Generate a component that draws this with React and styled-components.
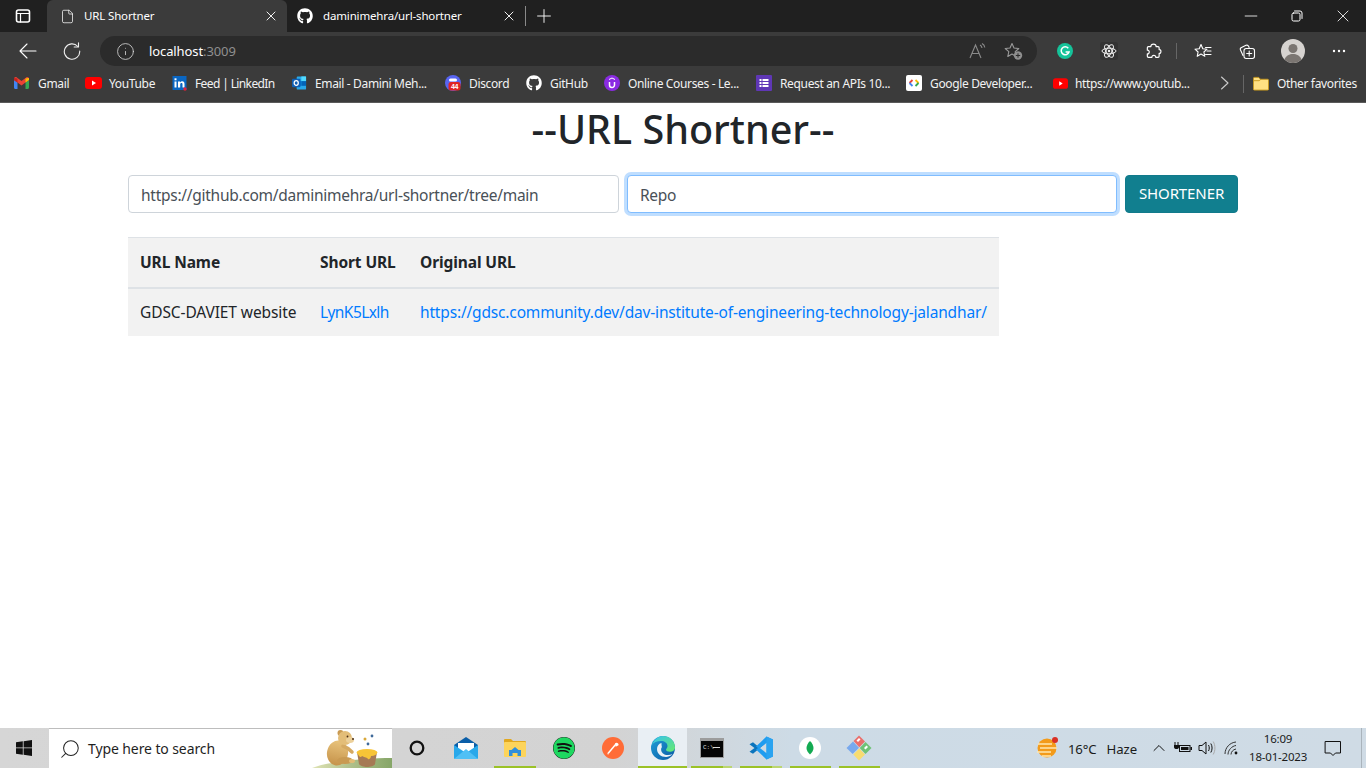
import React from "react";
import styled, { createGlobalStyle } from "styled-components";
import { Info, X, Plus, Minus, ChevronUp, Search, File } from "lucide-react";
import { FaGithub, FaSpotify } from "react-icons/fa";

const Global = createGlobalStyle`
  html, body { margin: 0; padding: 0; background: #fff; }
  body { font-family: "Noto Sans", "Open Sans", sans-serif; overflow: hidden; }
  * { box-sizing: border-box; }
`;
const Screen = styled.div`
  width: 1366px; height: 768px; display: flex; flex-direction: column; overflow: hidden;
`;
const TabStrip = styled.div`
  height: 32px; background: #202020; display: flex; align-items: stretch; color: #fff; font-size: 11.5px; letter-spacing: -0.15px;
`;
const SideButton = styled.div`
  width: 47px; display: flex; align-items: center; justify-content: center; padding-right: 1px;
`;
const Tab = styled.div`
  width: ${p => p.$w}px; height: 32px; display: flex; align-items: center; padding-left: ${p => p.$pad}px;
  background: ${p => p.$active ? "#3b3b3b" : "transparent"}; border-radius: 6px 6px 0 0; position: relative;
`;
const TabTitle = styled.span`
  flex: 1; margin-left: ${p => p.$gap}px; white-space: nowrap; padding-bottom: 1px;
`;
const TabClose = styled.span`
  width: 32px; display: flex; justify-content: center; margin-left: auto;
`;
const TabSep = styled.div`
  width: 1px; height: 20px; background: #8a8a8a; align-self: center;
`;
const NewTab = styled.div`
  width: 36px; display: flex; align-items: center; justify-content: center;
`;
const WindowControls = styled.div`
  margin-left: auto; display: flex; align-items: center;
`;
const WinBtn = styled.div`
  width: 46px; height: 32px; display: flex; align-items: center; justify-content: center;
`;
const Toolbar = styled.div`
  height: 34px; background: #3b3b3b; display: flex; align-items: flex-end; color: #fff;
`;
const NavBtn = styled.div`
  width: 44px; height: 30px; display: flex; align-items: center; justify-content: center;
  margin-left: ${p => p.$ml || 0}px;
`;
const AddressBar = styled.div`
  width: 937px; height: 30px; margin-left: 6px; background: #2b2b2b; border-radius: 15px; display: flex; align-items: center;
  font-size: 13px; padding-left: 16px; letter-spacing: -0.1px;
`;
const Host = styled.span`
  color: #fff; margin-left: 14px;
`;
const Port = styled.span`
  color: #8f8f8f;
`;
const AddrIcons = styled.div`
  margin-left: auto; display: flex; align-items: center; gap: 14px; padding-right: 12px;
`;
const AddrIcon = styled.div`
  width: 22px; height: 22px; display: flex; align-items: center; justify-content: center;
`;
const ToolIcons = styled.div`
  display: flex; align-items: center; margin-left: 6px;
`;
const VSep = styled.div`
  width: 1px; height: ${p => p.$h || 16}px; background: #666; margin: 0 ${p => p.$mr || 4}px 0 ${p => p.$ml || 1}px; flex: none;
`;
const Bookmarks = styled.div`
  height: 37px; background: #3b3b3b; border-bottom: 1px solid #5a5a5a; display: flex; align-items: center; color: #f2f2f2;
  font-size: 12px; padding-left: 14px; letter-spacing: -0.35px;
`;
const Bookmark = styled.div`
  display: flex; align-items: center; margin-right: ${p => p.$mr ?? 16}px; margin-left: ${p => p.$ml || 0}px; flex: none; padding-bottom: 2px;
`;
const BookmarkIcon = styled.span`
  width: ${p => p.$w || 16}px; height: 16px; display: flex; align-items: center; justify-content: center; margin-right: ${p => p.$gap || 0}px; flex: none;
`;
const BookmarkLabel = styled.span`
  width: ${p => p.$w}px; white-space: nowrap; letter-spacing: ${p => p.$ls || "inherit"};
`;
const Page = styled.main`
  flex: 1; background: #fff; padding: 0 128px; color: #212529; min-height: 0;
`;
const Title = styled.h1`
  margin: 1px 0 21px; height: 50px; font-size: 39.500px; font-weight: 500; line-height: 50px; text-align: center;
`;
const Form = styled.form`
  display: flex; gap: 8px; margin-bottom: 24px;
`;
const Field = styled.input`
  flex: none; width: ${p => p.$w}px; height: 38px; border: 1px solid ${p => p.$focus ? "#80bdff" : "#ced4da"}; border-radius: 4px; padding: 2px 12px 0;
  font: 400 15.500px "Noto Sans", sans-serif; letter-spacing: -0.27px; color: #495057; background: #fff; outline: none;
  box-shadow: ${p => p.$focus ? "0 0 0 3px rgba(0,123,255,.25)" : "none"};
`;
const Submit = styled.button`
  width: 113px; height: 38px; border: 1px solid #117a8b; background: #117f8f; color: #fff; border-radius: 4px; padding: 0 0 2px;
  font: 400 15px "Noto Sans", sans-serif; letter-spacing: -0.1px;
`;
const Table = styled.table`
  width: 871px; border-collapse: collapse; table-layout: fixed; background: #f2f2f2; font-size: 15.500px; letter-spacing: -0.1px;
`;
const Th = styled.th`
  width: ${p => p.$w}px; height: 50px; text-align: left; padding: 0 12px; font-weight: 700; color: #212529; letter-spacing: -0.1px;
  border-top: 1px solid #dee2e6; border-bottom: 2px solid #dee2e6; white-space: nowrap;
`;
const Td = styled.td`
  height: 48px; padding: 0 12px; white-space: nowrap;
`;
const LinkText = styled.a`
  color: #007bff; text-decoration: none; letter-spacing: ${p => p.$ls};
`;
const Taskbar = styled.footer`
  height: 40px; flex: none; display: flex; align-items: stretch; background: linear-gradient(90deg, #d6d6d6 0%, #d3d3d3 45%, #cddbe6 58%, #cfdbe5 100%); color: #111;
`;
const StartBtn = styled.div`
  width: 49px; display: flex; align-items: center; justify-content: center; padding-right: 1px;
`;
const SearchBox = styled.div`
  width: 343px; background: #fff; border-top: 1px solid #bdbdbd; display: flex; align-items: center; position: relative; font-size: 14px; color: #1f1f1f; padding-left: 10px; letter-spacing: -0.1px; overflow: hidden;
`;
const SearchText = styled.span`
  margin-left: 7px;
`;
const Bear = styled.svg`
  position: absolute; right: 0; bottom: 0;
`;
const TaskIcons = styled.div`
  display: flex;
`;
const TaskBtn = styled.div`
  width: 49.200px; height: 40px; display: flex; align-items: center; justify-content: center; position: relative;
  background: ${p => p.$active ? "#e9eff4" : "transparent"};
`;
const RunLine = styled.span`
  position: absolute; left: ${p => p.$active ? 0 : 4}px; right: ${p => p.$active ? 0 : 4}px; bottom: 0; height: 2px; background: #9bc227;
`;
const StackLine = styled.span`
  position: absolute; left: 36px; right: 4px; bottom: 0; height: 2px; background: #bcd671;
`;
const Tray = styled.div`
  margin-left: auto; display: flex; align-items: center; font-size: 12.500px; color: #1b1b1b; letter-spacing: -0.1px;
`;
const Weather = styled.div`
  display: flex; align-items: center; margin-right: 10px;
`;
const WeatherText = styled.span`
  margin-left: ${p => p.$ml}px; font-size: 13.200px; padding-top: 2px;
`;
const TrayIcon = styled.div`
  width: ${p => p.$w || 24}px; height: 40px; display: flex; align-items: center; justify-content: center;
`;
const Clock = styled.div`
  width: 58px; margin-left: 4px; text-align: center; font-size: 11.500px; line-height: 18px; letter-spacing: -0.2px; white-space: nowrap;
`;
const NoticeBtn = styled.div`
  width: 38px; margin-left: 7px; display: flex; align-items: center; justify-content: center;
`;
const ShowDesktop = styled.div`
  width: 5px; height: 40px; border-left: 1px solid #aab4bc; margin-left: 9px;
`;

const Stroke = ({ s = 16, w = 1, c = "#fff", children, vb = 16 }) => (
  <svg width={s} height={s} viewBox={`0 0 ${vb} ${vb}`} fill="none" stroke={c} strokeWidth={w} strokeLinecap="round" strokeLinejoin="round">{children}</svg>
);

const SidebarIcon = () => <Stroke s={16}><rect x="1.500" y="2" width="13" height="12" rx="2" strokeWidth="1.600"/><path d="M1.500 5.500h13M5.500 5.500V14" strokeWidth="1.200"/></Stroke>;
const RestoreIcon = () => <Stroke s={12} vb={12} w={1}><rect x="1" y="3" width="8" height="8" rx="1.500"/><path d="M3.500 1h5.500a2 2 0 0 1 2 2v5.500"/></Stroke>;
const BackIcon = () => <Stroke s={18} vb={18} w={1.100}><path d="M1 9h16M8 2 1 9l7 7"/></Stroke>;
const RefreshIcon = () => <Stroke s={18} vb={18} w={1.100} c="#eee"><path d="M14.800 4.500A7.700 7.700 0 1 0 16.700 9"/><path d="M15.500 0.800v4.200h-4.300"/></Stroke>;
const ChevronIcon = () => <Stroke s={16} w={1.100} c="#ccc"><path d="M4.500 2 11 8l-6.500 6"/></Stroke>;
const ReadIcon = () => <svg width="20" height="18" viewBox="0 0 20 18" fill="none" stroke="#8a8a8a" strokeWidth="1.100"><path d="M2 16 7.500 3 13 16M4 11.500h7"/><path d="M12 3c1.200.6 1.800 1.600 2 3M14 1.500c1.600.8 2.600 2.200 2.800 4"/></svg>;
const StarPlus = () => <svg width="20" height="20" viewBox="0 0 20 20" fill="none"><path d="M8 2.500 10 7l4.800.5-3.600 3.200 1 4.800L8 13l-4.200 2.500 1-4.800L1.200 7.500 6 7Z" stroke="#9a9a9a" strokeWidth="1.100" strokeLinejoin="round"/><circle cx="14" cy="14.500" r="4.200" fill="#8f8f8f"/><path d="M14 12.300v4.400M11.800 14.500h4.400" stroke="#2b2b2b" strokeWidth="1"/></svg>;
const Grammarly = () => <svg width="16" height="16" viewBox="0 0 16 16"><circle cx="8" cy="8" r="8" fill="#15c39a"/><path d="M11.300 5.200A4 4 0 1 0 12 9H8.600" fill="none" stroke="#fff" strokeWidth="1.500"/></svg>;
const Atom = () => <svg width="18" height="18" viewBox="0 0 18 18" fill="none" stroke="#eee" strokeWidth="1"><rect width="18" height="18" rx="3" fill="#333" stroke="none"/><ellipse cx="9" cy="9" rx="7" ry="2.800"/><ellipse cx="9" cy="9" rx="7" ry="2.800" transform="rotate(60 9 9)"/><ellipse cx="9" cy="9" rx="7" ry="2.800" transform="rotate(120 9 9)"/><circle cx="9" cy="9" r="1.200" fill="#eee" stroke="none"/></svg>;
const Puzzle = () => <Stroke s={17} w={1.100}><path d="M5.600 3.400c-.2-1.400.9-2.400 2.400-2.400s2.600 1 2.400 2.400h1.900c.6 0 1 .4 1 1v1.800c1-.2 1.700.6 1.700 1.800s-.7 2-1.700 1.800v2.700c0 .6-.4 1-1 1h-2.200c.2-1.100-.7-1.900-1.800-1.900s-2 .8-1.800 1.900H3.200c-.6 0-1-.4-1-1v-2.300c1 .3 1.800-.6 1.800-1.700S3.200 6.500 2.200 6.800V4.400c0-.6.4-1 1-1Z"/></Stroke>;
const Favorites = () => <Stroke s={18} vb={18} w={1.100}><path d="M7 2.500 8.800 6.800l4.200.4-3.100 2.800.9 4.300L7 12.100l-3.800 2.200.9-4.300L1 7.200l4.200-.4Z"/><path d="M11.500 5.500h5.500M13 9h4M11.500 12.500h5.500"/></Stroke>;
const Collections = () => <Stroke s={18} vb={18} w={1.100}><path d="M5 13.500 2.500 8a2 2 0 0 1 1-2.600L8 3.300a2 2 0 0 1 2.600 1l.5 1.200"/><rect x="6" y="6.500" width="10.500" height="10" rx="2.200"/><path d="M11.200 9v5M8.700 11.500h5"/></Stroke>;
const Avatar = () => <svg width="24" height="24" viewBox="0 0 24 24"><circle cx="12" cy="12" r="12" fill="#d6d3d0"/><circle cx="12" cy="9.500" r="4.500" fill="#7b7672"/><path d="M3.500 20.500c1.500-4 5-5.500 8.500-5.500s7 1.500 8.500 5.500A12 12 0 0 1 3.500 20.500Z" fill="#7b7672"/></svg>;
const Dots = () => <svg width="14" height="4" viewBox="0 0 14 4" fill="#fff"><circle cx="2" cy="2" r="1.200"/><circle cx="7" cy="2" r="1.200"/><circle cx="12" cy="2" r="1.200"/></svg>;

const GmailIcon = () => <svg width="15" height="12" viewBox="0 0 15 12"><path d="M0 3v7.500c0 .8.600 1.500 1.400 1.500H3.500V5.500Z" fill="#4285f4"/><path d="M15 3v7.500c0 .8-.6 1.500-1.400 1.500H11.500V5.500Z" fill="#34a853"/><path d="M0 1.800C0 .4 1.600-.5 2.800.4L7.500 4 12.200.4C13.400-.5 15 .4 15 1.800V3l-3.500 2.500L7.500 8.500 3.500 5.500 0 3Z" fill="#ea4335"/><path d="M11.500 1.500 15 1v2l-3.500 2.500Z" fill="#fbbc04"/><path d="M0 1v2l3.500 2.500v-4Z" fill="#c5221f"/></svg>;
const YouTubeIcon = ({ w = 17, h = 12 }) => <svg width={w} height={h} viewBox="0 0 17 12"><rect width="17" height="12" rx="3" fill="#f00"/><path d="M7 3.500v5l4-2.500Z" fill="#fff"/></svg>;
const LinkedInIcon = () => <svg width="15" height="16" viewBox="0 0 15 16"><rect x=".5" y="1" width="14" height="14" fill="#0a66c2"/><rect x="2.500" y="6.500" width="2" height="6" fill="#fff"/><rect x="2.500" y="3.300" width="2" height="2" fill="#fff"/><path d="M6 6.500h2v1c.5-.8 1.300-1.200 2.200-1.200 1.600 0 2.300 1 2.300 2.700v3.500h-2V9.300c0-.8-.3-1.300-1-1.300-.8 0-1.300.6-1.300 1.400v3.100H6Z" fill="#fff"/><circle cx="13" cy="14" r="1.700" fill="#e5203a"/></svg>;
const OutlookIcon = () => <svg width="15" height="16" viewBox="0 0 16 16"><rect x="5" y="1" width="10" height="14" rx="1" fill="#28a8ea"/><rect x="10" y="1" width="5" height="5" fill="#50d9ff"/><rect x="5" y="6" width="5" height="5" fill="#0078d4"/><rect x="10" y="6" width="5" height="5" fill="#0364b8"/><rect x="0" y="3.500" width="9" height="9" rx="1" fill="#0f5fb4"/><ellipse cx="4.500" cy="8" rx="2.200" ry="2.600" fill="none" stroke="#fff" strokeWidth="1.300"/></svg>;
const DiscordIcon = () => <svg width="16" height="16" viewBox="0 0 16 16"><circle cx="8" cy="8" r="8" fill="#5865f2"/><rect x="3.500" y="7" width="12" height="8.500" rx="2.500" fill="#e02424"/><text x="9.500" y="14" fontSize="7" fontWeight="700" fontFamily="Liberation Sans" textAnchor="middle" fill="#fff">44</text><rect x="4" y="3.500" width="8" height="3" rx="1.500" fill="#fff"/></svg>;
const UdemyIcon = () => <svg width="16" height="16" viewBox="0 0 16 16"><circle cx="8" cy="8" r="8" fill="#8a2be2"/><path d="M5.500 7v3a2.500 2.500 0 0 0 5 0V7" fill="none" stroke="#fff" strokeWidth="1.500"/><path d="M5 4.500 8 3l3 1.500" fill="none" stroke="#fff" strokeWidth="1"/></svg>;
const FormsIcon = () => <svg width="16" height="16" viewBox="0 0 16 16"><rect width="16" height="16" rx="1" fill="#5f37b5"/><g fill="#fff"><rect x="3.500" y="4" width="2" height="2"/><rect x="6.500" y="4" width="6" height="2"/><rect x="3.500" y="7" width="2" height="2"/><rect x="6.500" y="7" width="6" height="2"/><rect x="3.500" y="10" width="2" height="2"/><rect x="6.500" y="10" width="6" height="2"/></g></svg>;
const GoogleDevIcon = () => <svg width="16" height="16" viewBox="0 0 16 16" fill="none" strokeWidth="1.800"><rect width="16" height="16" rx="2" fill="#fff"/><path d="M6.500 5 3.500 8" stroke="#ea4335"/><path d="M3.500 8l3 3" stroke="#4285f4"/><path d="M9.500 5l3 3" stroke="#fbbc04"/><path d="M12.500 8l-3 3" stroke="#34a853"/></svg>;
const FolderIcon = () => <svg width="17" height="15" viewBox="0 0 17 15"><path d="M.5 2a1 1 0 0 1 1-1h4.500l2 2h7.500a1 1 0 0 1 1 1v9.500a1 1 0 0 1-1 1h-14a1 1 0 0 1-1-1Z" fill="#ffe082" stroke="#c8991f"/><path d="M.5 4.500h6l2-1.500" fill="none" stroke="#c8991f"/></svg>;

const WindowsLogo = () => <svg width="16" height="16" viewBox="0 0 16 16" fill="#111"><path d="M0 2.300 6.800 1.300V7.500H0ZM7.600 1.200 16 0V7.500H7.600ZM0 8.300H6.800V14.700L0 13.700ZM7.600 8.300H16V16L7.600 14.800Z"/></svg>;
const CortanaIcon = () => <svg width="16" height="16" viewBox="0 0 16 16" fill="none"><circle cx="8" cy="8" r="6.300" stroke="#111" strokeWidth="2.300"/></svg>;
const MailIcon = () => <svg width="26" height="24" viewBox="0 0 26 24"><path d="M1 9 13 1l12 8v3H1Z" fill="#0a5ea8"/><path d="M5 7h16v10H5Z" fill="#fff"/><path d="M1 9l12 8 12-8v13a1 1 0 0 1-1 1H2a1 1 0 0 1-1-1Z" fill="#28a8ea"/><path d="M1 23 13 13l12 10Z" fill="#50c0f5"/></svg>;
const ExplorerIcon = () => <svg width="22" height="20" viewBox="0 0 22 20"><path d="M0 2a1 1 0 0 1 1-1h6l2 2h12a1 1 0 0 1 1 1v3H0Z" fill="#e2a81e"/><rect y="4" width="22" height="15" rx="1" fill="#fdd45b"/><path d="M5 18v-6h2.500l3.500-3 3.500 3H17v6h-3.500v-3h-5v3Z" fill="#2f8fdc"/></svg>;
const PostmanIcon = () => <svg width="22" height="22" viewBox="0 0 22 22"><circle cx="11" cy="11" r="11" fill="#ff6c37"/><path d="M6 16.500 14 7" stroke="#fff" strokeWidth="1.500"/><path d="M13 6.500a2 2 0 0 1 3.500 1.800l-2.800 1.500Z" fill="#fff"/><path d="M5.500 17l1-.5" stroke="#ffd2bd" strokeWidth="1.400"/></svg>;
const EdgeIcon = () => <svg width="24" height="24" viewBox="0 0 24 24"><defs><linearGradient id="eg1" x1="0" y1="0" x2="1" y2="1"><stop offset="0" stopColor="#1e9fd8"/><stop offset="1" stopColor="#0c59a4"/></linearGradient><linearGradient id="eg2" x1="0" y1="0" x2="1" y2="1"><stop offset="0" stopColor="#35c1f1"/><stop offset="1" stopColor="#66eb6e"/></linearGradient></defs><circle cx="12" cy="12" r="12" fill="url(#eg1)"/><path d="M1 9C3 3 8 0 12 0c6.500 0 12 4.800 12 11.500 0 2.800-2.500 4.300-5.200 4.300-2 0-3.800-.8-3.800-2 0-1.500 1.500-1.500 1.500-3.800C16.500 7 13.500 5 10 5 6 5 2.500 6.500 1 9Z" fill="url(#eg2)"/><path d="M10.500 7c-3 .8-4.500 3-4.500 6 0 4.500 3.800 8 9 8 2.200 0 4.500-.8 6.500-3-3 1.500-7.500 1.500-9.800-.8-1.800-1.800-2.200-4.500-.8-6.200-.4-1.500-.4-3 -.4-4Z" fill="#eaf1f6"/></svg>;
const CmdIcon = () => <svg width="24" height="20" viewBox="0 0 24 20"><rect width="24" height="20" fill="#9c9c9c"/><rect x="1" y="3" width="22" height="16" fill="#050505"/><text x="3" y="10.500" fontSize="6" fill="#ddd" fontFamily="Liberation Mono">C:\</text><rect x="13" y="9" width="7" height="1" fill="#ddd"/></svg>;
const VSCodeIcon = () => <svg width="24" height="24" viewBox="0 0 24 24"><path d="M17.500 6.500 4 17.800l-3.500-2L5.500 12 .5 8.200 4 6.200l6 5Z" fill="#0a74bd"/><path d="M17.500.5 7 10.500l3 2.300 7.500-6v10.400l-7.500-6-3 2.300 10.500 10L24 20.500v-17Z" fill="#1f9cf0"/><path d="M17.500.5 24 3.500v17l-6.500 3Z" fill="#2aa3f0"/></svg>;
const MongoIcon = () => <svg width="22" height="22" viewBox="0 0 22 22"><circle cx="11" cy="11" r="11" fill="#fff"/><path d="M11 4c2 2 3.500 4.500 3.500 7s-1.500 4.800-3.500 6.500C9 15.800 7.500 13.500 7.500 11S9 6 11 4Z" fill="#13aa52"/></svg>;
const KrakenIcon = () => <svg width="26" height="26" viewBox="0 0 26 26"><path d="M.5 13 7 6.500 13 12.800 6.700 19Z" fill="#78a9ee"/><path d="M7.500 6 13 .5l6 6-5.700 5.800Z" fill="#ea6f6c"/><path d="M10.500 5.500 13 3l1.500 1.500-2.500 2.500Z" fill="#fff"/><path d="M13.700 13 19.500 7l6 6-6 6Z" fill="#6fc276"/><path d="M18 13l2.500-2.500 1.500 1.500-2.500 2.500Z" fill="#fff"/><path d="M7.300 19.500 13.300 13.500 19 19.500l-6 6Z" fill="#f7dc70"/></svg>;
const HoneyBear = () => (
  <Bear width="80" height="39" viewBox="0 0 80 39">
    <defs>
      <linearGradient id="fur" x1="0" y1="0" x2="0" y2="1"><stop offset="0" stopColor="#e8c37c"/><stop offset="1" stopColor="#c6934a"/></linearGradient>
      <linearGradient id="hill" x1="0" y1="0" x2="1" y2="0"><stop offset="0" stopColor="#dfe3b4"/><stop offset=".5" stopColor="#aebf8a"/><stop offset="1" stopColor="#86a668"/></linearGradient>
    </defs>
    <path d="M0 39C8 36 16 34 30 33c14-3 32-4 50-4v10Z" fill="url(#hill)"/>
    <ellipse cx="25.500" cy="24" rx="10.500" ry="12.500" transform="rotate(12 25.500 24)" fill="url(#fur)"/>
    <ellipse cx="33" cy="31.500" rx="8" ry="3.500" fill="#c99a52"/>
    <ellipse cx="40" cy="32" rx="3" ry="2" fill="#e2bc76"/>
    <path d="M31 17c3 1 6 3 9 6" stroke="#d5a962" strokeWidth="3.500" strokeLinecap="round"/>
    <circle cx="28.500" cy="4" r="3" fill="#c99a52"/>
    <circle cx="33" cy="9" r="7" fill="#e3bd78"/>
    <ellipse cx="38" cy="11" rx="4" ry="3" fill="#ecd09a"/>
    <circle cx="41" cy="10" r="1" fill="#4a2f18"/>
    <circle cx="35.500" cy="7.500" r=".9" fill="#4a2f18"/>
    <path d="M45 23h20l-2 12c-.4 2-5 3-8 3s-7-1-8-3Z" fill="#a67a55"/>
    <ellipse cx="55" cy="23.500" rx="10.500" ry="3.500" fill="#f7c437"/>
    <path d="M46 25c1 3 3 4 4 2 3 2 5 1 6 3 2 1 3-2 3-3 3 0 5-1 6-3l-10-1Z" fill="#f7c437"/>
    <circle cx="53" cy="10" r="1.500" fill="#d9a83a"/><circle cx="60" cy="7" r="1.400" fill="#3f6a99"/><circle cx="56" cy="15" r="1.400" fill="#3f6a99"/>
  </Bear>
);
const WeatherIcon = () => <svg width="24" height="24" viewBox="0 0 24 24"><circle cx="11" cy="12" r="9.500" fill="#f39b1a"/><path d="M2 8h14M4 12h17M1 16h14M6 20h9" stroke="#ffe8b0" strokeWidth="1.600"/><circle cx="19" cy="4" r="3" fill="#d93025"/></svg>;
const Battery = () => <svg width="18" height="14" viewBox="0 0 18 14"><path d="M1 1v3M4 1v3" stroke="#111"/><path d="M0 4h5v2c0 1.500-1 2-2.500 2S0 7.500 0 6Z" fill="#111"/><rect x="5.500" y="4.500" width="10.500" height="6" fill="none" stroke="#111"/><rect x="7" y="6" width="7.500" height="3" fill="#111"/><rect x="16.500" y="6" width="1.500" height="3" fill="#111"/></svg>;
const Speaker = () => <svg width="18" height="16" viewBox="0 0 18 16" fill="none" stroke="#111"><path d="M1 5.500h3l4-3.500v12L4 10.500H1Z"/><path d="M10.500 5c1 1.800 1 4.200 0 6M12.800 3.500c1.700 2.700 1.700 6.300 0 9" /><path d="M15.200 1.500c2.300 4 2.300 9 0 13" stroke="#aaa"/></svg>;
const WifiIcon = () => <svg width="16" height="16" viewBox="0 0 16 16" fill="none" stroke="#333" strokeWidth="1"><path d="M1 14C1 7.500 6 2.500 12 2"/><path d="M4 14.500C4 10 8 6 12 5.500"/><path d="M7 14.500c0-2.500 2-5 5-5.500"/><circle cx="12" cy="13" r="1.400" fill="#111" stroke="none"/></svg>;
const NoticeIcon = () => <Stroke s={18} vb={18} c="#111" w={1}><path d="M1.500 2.500h15v11.500h-5L9 16.500 6.500 14h-5Z"/></Stroke>;

const bookmarks = [
  { icon: <GmailIcon />, label: "Gmail", w: 31, iw: 15, gap: 9 },
  { icon: <YouTubeIcon />, label: "YouTube", w: 46, iw: 17, gap: 7 },
  { icon: <LinkedInIcon />, label: "Feed | LinkedIn", w: 80, iw: 16, gap: 8, ls: "-0.62px" },
  { icon: <OutlookIcon />, label: "Email - Damini Meh...", w: 114, iw: 16, gap: 8 },
  { icon: <DiscordIcon />, label: "Discord", w: 41, iw: 16, gap: 8 },
  { icon: <FaGithub size={16} color="#fff" />, label: "GitHub", w: 38, iw: 16, gap: 8 },
  { icon: <UdemyIcon />, label: "Online Courses - Le...", w: 112, iw: 16, gap: 8 },
  { icon: <FormsIcon />, label: "Request an APIs 10...", w: 110, iw: 16, gap: 8 },
  { icon: <GoogleDevIcon />, label: "Google Developer...", w: 106, iw: 16, gap: 8 },
  { icon: <YouTubeIcon w={15} h={11} />, label: "https://www.youtub...", w: 115, iw: 16, gap: 7 },
];

const taskApps = [
  { icon: <MailIcon /> },
  { icon: <ExplorerIcon />, running: true },
  { icon: <FaSpotify size={22} color="#1ed760" style={{ background: "#111", borderRadius: "50%" }} /> },
  { icon: <PostmanIcon /> },
  { icon: <EdgeIcon />, running: true, active: true },
  { icon: <CmdIcon />, running: true, stacked: true },
  { icon: <VSCodeIcon />, running: true, stacked: true },
  { icon: <MongoIcon />, running: true },
  { icon: <KrakenIcon />, running: true },
];

export default function App() {
  return (
    <Screen>
      <Global />
      <TabStrip>
        <SideButton><SidebarIcon /></SideButton>
        <Tab $active $w={240} $pad={13}>
          <File size={15} color="#fff" strokeWidth={1.200} />
          <TabTitle $gap={9}>URL Shortner</TabTitle>
          <TabClose><X size={16} color="#fff" strokeWidth={1.400} /></TabClose>
        </Tab>
        <Tab $w={238} $pad={10}>
          <FaGithub size={16} color="#fff" />
          <TabTitle $gap={10}>daminimehra/url-shortner</TabTitle>
          <TabClose><X size={16} color="#fff" strokeWidth={1.400} /></TabClose>
        </Tab>
        <TabSep />
        <NewTab><Plus size={22} color="#fff" strokeWidth={1} /></NewTab>
        <WindowControls>
          <WinBtn><Minus size={20} color="#fff" strokeWidth={1} /></WinBtn>
          <WinBtn><RestoreIcon /></WinBtn>
          <WinBtn><X size={20} color="#fff" strokeWidth={1} /></WinBtn>
        </WindowControls>
      </TabStrip>
      <Toolbar>
        <NavBtn $ml={6}><BackIcon /></NavBtn>
        <NavBtn><RefreshIcon /></NavBtn>
        <AddressBar>
          <Info size={19} color="#ddd" strokeWidth={1} />
          <Host>localhost<Port>:3009</Port></Host>
          <AddrIcons>
            <AddrIcon><ReadIcon /></AddrIcon>
            <AddrIcon><StarPlus /></AddrIcon>
          </AddrIcons>
        </AddressBar>
        <ToolIcons>
          <NavBtn><Grammarly /></NavBtn>
          <NavBtn><Atom /></NavBtn>
          <NavBtn><Puzzle /></NavBtn>
          <VSep />
          <NavBtn><Favorites /></NavBtn>
          <NavBtn><Collections /></NavBtn>
          <NavBtn $ml={2}><Avatar /></NavBtn>
          <NavBtn $ml={2}><Dots /></NavBtn>
        </ToolIcons>
      </Toolbar>
      <Bookmarks>
        {bookmarks.map(b => (
          <Bookmark key={b.label}>
            <BookmarkIcon $w={b.iw} $gap={b.gap}>{b.icon}</BookmarkIcon>
            <BookmarkLabel $w={b.w} $ls={b.ls}>{b.label}</BookmarkLabel>
          </Bookmark>
        ))}
        <Bookmark $ml={11} $mr={8}><BookmarkIcon $w={16}><ChevronIcon /></BookmarkIcon></Bookmark>
        <VSep $h={18} $ml={2} $mr={9} />
        <Bookmark $mr={0}>
          <BookmarkIcon $w={16} $gap={8}><FolderIcon /></BookmarkIcon>
          <BookmarkLabel $w={80}>Other favorites</BookmarkLabel>
        </Bookmark>
      </Bookmarks>
      <Page>
        <Title>--URL Shortner--</Title>
        <Form onSubmit={e => e.preventDefault()}>
          <Field $w={491} readOnly value="https://github.com/daminimehra/url-shortner/tree/main" />
          <Field $w={490} $focus readOnly value="Repo" />
          <Submit type="button">SHORTENER</Submit>
        </Form>
        <Table>
          <thead>
            <tr>
              <Th $w={180}>URL Name</Th>
              <Th $w={100}>Short URL</Th>
              <Th $w={591}>Original URL</Th>
            </tr>
          </thead>
          <tbody>
            <tr>
              <Td>GDSC-DAVIET website</Td>
              <Td><LinkText href="#" $ls="-0.58px">LynK5Lxlh</LinkText></Td>
              <Td><LinkText href="#" $ls="-0.165px">https://gdsc.community.dev/dav-institute-of-engineering-technology-jalandhar/</LinkText></Td>
            </tr>
          </tbody>
        </Table>
      </Page>
      <Taskbar>
        <StartBtn><WindowsLogo /></StartBtn>
        <SearchBox>
          <Search size={22} color="#222" strokeWidth={1.100} style={{ transform: "scaleX(-1)" }} />
          <SearchText>Type here to search</SearchText>
          <HoneyBear />
        </SearchBox>
        <TaskIcons>
          <TaskBtn><CortanaIcon /></TaskBtn>
          {taskApps.map((a, i) => (
            <TaskBtn key={i} $active={a.active}>
              {a.icon}
              {a.running && <RunLine $active={a.active} />}
              {a.stacked && <StackLine />}
            </TaskBtn>
          ))}
        </TaskIcons>
        <Tray>
          <Weather>
            <WeatherIcon />
            <WeatherText $ml={8}>16°C</WeatherText>
            <WeatherText $ml={10}>Haze</WeatherText>
          </Weather>
          <TrayIcon><ChevronUp size={20} color="#111" strokeWidth={1.200} /></TrayIcon>
          <TrayIcon><Battery /></TrayIcon>
          <TrayIcon><Speaker /></TrayIcon>
          <TrayIcon $w={26}><WifiIcon /></TrayIcon>
          <Clock>16:09<br />18-01-2023</Clock>
          <NoticeBtn><NoticeIcon /></NoticeBtn>
          <ShowDesktop />
        </Tray>
      </Taskbar>
    </Screen>
  );
}
